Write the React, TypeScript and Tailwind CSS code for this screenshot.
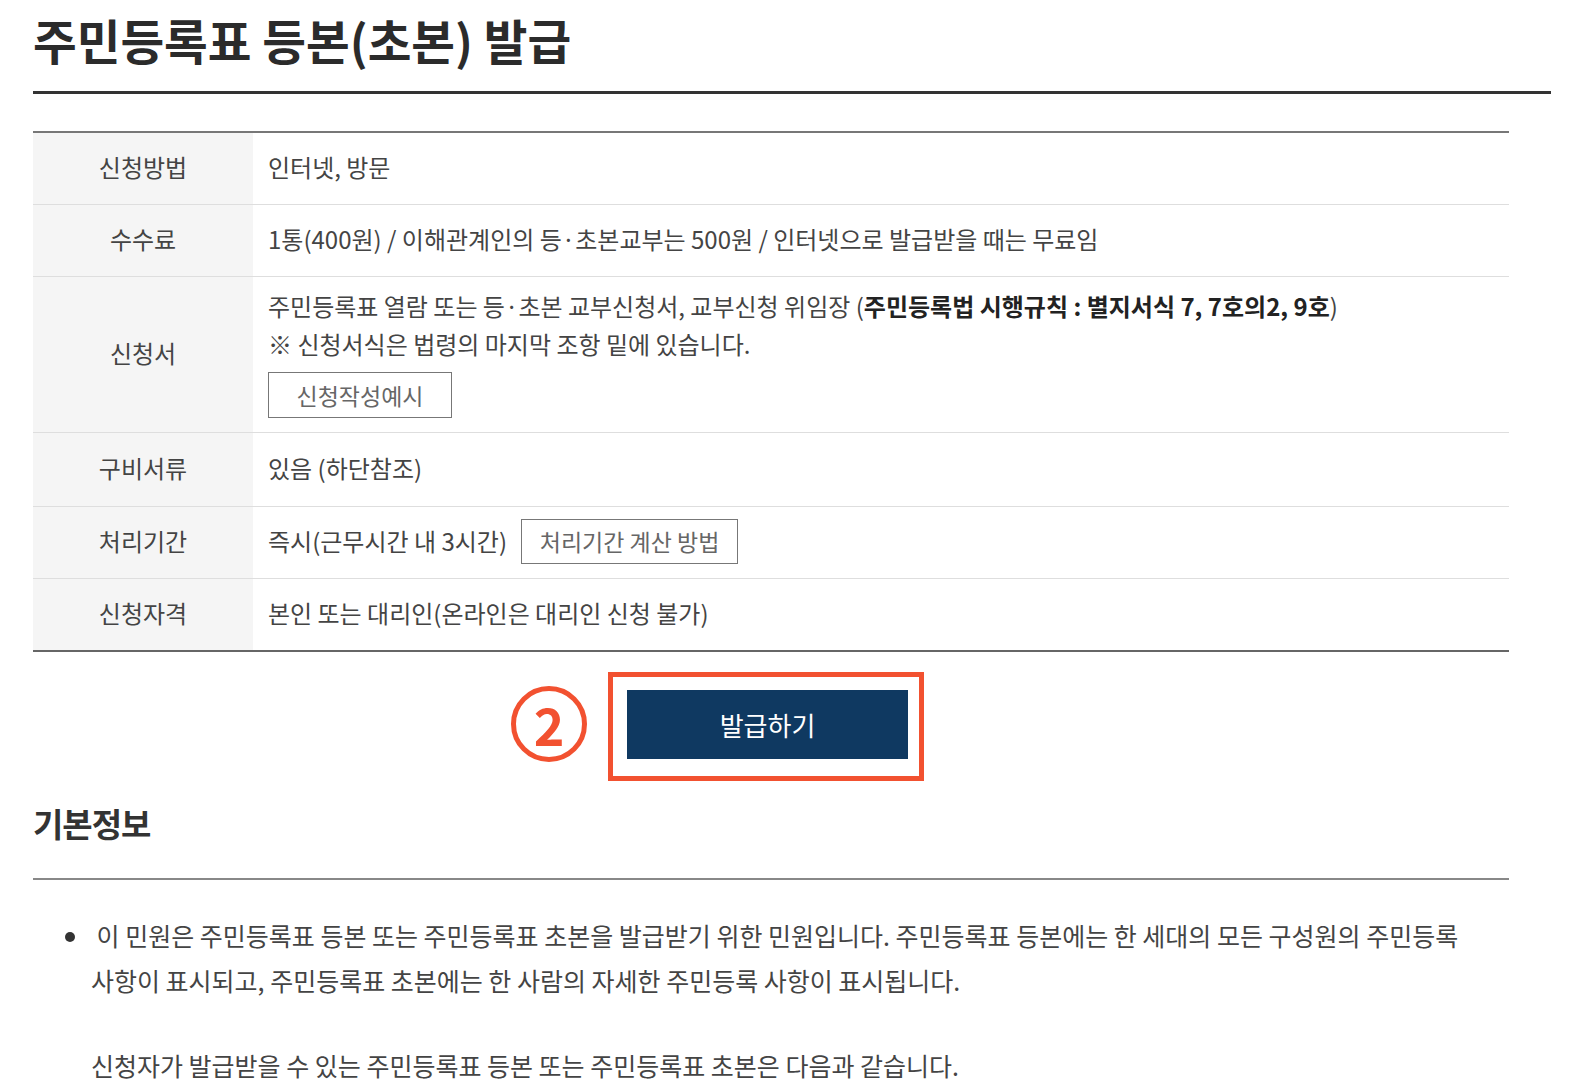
function Row({ label, children, last, className }: { label: string; children: React.ReactNode; last?: boolean; className?: string }) {
  return (
    <div className={`flex ${last ? '' : 'border-b border-[#dedede]'} ${className ?? 'min-h-[72px]'}`}>
      <div className="w-[220px] shrink-0 bg-[#f5f5f5] pb-[3px] flex items-center justify-center text-[#444]">{label}</div>
      <div className="flex-1 pl-[15px] pr-4 pb-[3px] flex items-center text-[#444]">{children}</div>
    </div>
  );
}

export default function App() {
  return (
    <div className="min-h-screen bg-white pl-[33px] font-['Noto_Sans_CJK_KR','Noto_Sans',sans-serif] text-[#333]">
      {/* 제목 */}
      <h1 className="w-[1518px] pt-[10px] pb-[21px] text-[47.5px] leading-[60px] font-bold text-[#2b2b2b] border-b-[3px] border-[#333]">
        주민등록표 등본(초본) 발급
      </h1>

      {/* 요약 표 */}
      <div className="w-[1476px] mt-[37px] border-t-2 border-b-2 border-t-[#777] border-b-[#666] text-[24px] leading-[36px]">
        <Row label="신청방법">인터넷, 방문</Row>
        <Row label="수수료">
          <span>1통(400원) / 이해관계인의 등·초본교부는 500원 / 인터넷으로 발급받을 때는 무료임</span>
        </Row>
        <Row label="신청서" className="h-[156px]">
          <div className="self-start pt-[10px] leading-[38px]">
            <p>
              주민등록표 열람 또는 등·초본 교부신청서, 교부신청 위임장 (
              <b className="font-bold text-[#222]">주민등록법 시행규칙 : 별지서식 7, 7호의2, 9호</b>)
            </p>
            <p>※ 신청서식은 법령의 마지막 조항 밑에 있습니다.</p>
            <button className="mt-[9px] w-[184px] h-[46px] border border-[#777] text-[23px] leading-[36px] text-[#666] bg-white">
              신청작성예시
            </button>
          </div>
        </Row>
        <Row label="구비서류" className="min-h-[74px]">있음 (하단참조)</Row>
        <Row label="처리기간">
          <span>즉시(근무시간 내 3시간)</span>
          <button className="ml-[14px] w-[217px] h-[45px] border border-[#777] text-[23px] text-[#666] bg-white">
            처리기간 계산 방법
          </button>
        </Row>
        <Row label="신청자격" last className="min-h-[71px]">본인 또는 대리인(온라인은 대리인 신청 불가)</Row>
      </div>

      {/* 발급 버튼 */}
      <div className="w-[1476px] mt-[20px] flex justify-center pr-[10px]">
        <div className="relative">
          <div className="absolute right-full mr-[21px] top-[14px] w-[76px] h-[76px] rounded-full border-[5px] border-[#f25130] flex items-center justify-center text-[#f25130] text-[52px] font-bold leading-none">
            2
          </div>
          <div className="border-[5px] border-[#f25130] pt-[13px] pb-[17px] pl-[14px] pr-[11px]">
            <button className="w-[281px] h-[69px] bg-[#0f3961] text-white text-[26px]">발급하기</button>
          </div>
        </div>
      </div>

      {/* 기본정보 */}
      <h2 className="w-[1476px] mt-[22px] pb-[35px] text-[33px] leading-[40px] font-bold text-[#333] tracking-[-1px] border-b-2 border-[#888]">
        기본정보
      </h2>

      <div className="w-[1476px] text-[25px] leading-[45px] text-[#444] break-keep">
        <ul className="mt-[33px] list-disc pl-[58px] marker:text-[#333]">
          <li className="pr-[40px]">
            &nbsp;이 민원은 주민등록표 등본 또는 주민등록표 초본을 발급받기 위한 민원입니다. 주민등록표 등본에는 한 세대의 모든 구성원의 주민등록 사항이 표시되고, 주민등록표 초본에는 한 사람의 자세한 주민등록 사항이 표시됩니다.
          </li>
        </ul>
        <p className="mt-[40px] pl-[58px]">신청자가 발급받을 수 있는 주민등록표 등본 또는 주민등록표 초본은 다음과 같습니다.</p>
      </div>
    </div>
  );
}
